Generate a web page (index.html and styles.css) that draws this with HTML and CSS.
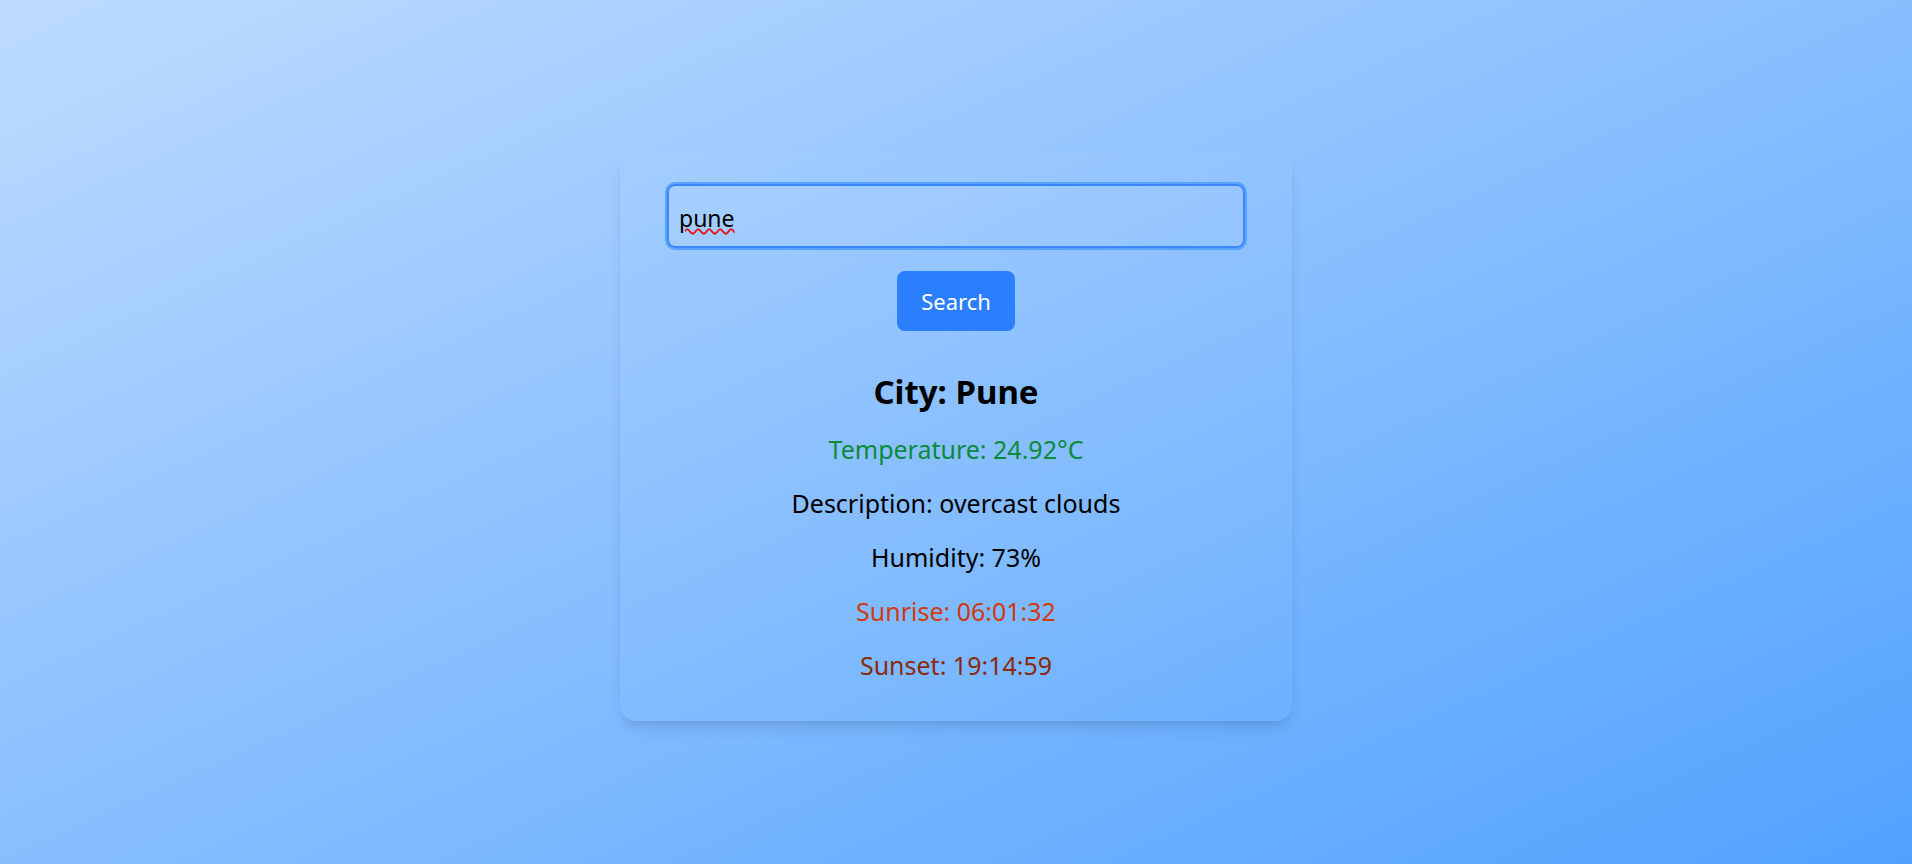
FILE: index.html
```html
<!DOCTYPE html>
<html lang="en">
<head>
<meta charset="utf-8">
<title>Weather</title>
<link rel="stylesheet" href="styles.css">
</head>
<body>
<main class="page">
  <section class="card">
    <div class="input-wrap">
      <input class="city-input" type="text" value="pune" spellcheck="false">
      <span class="spell" aria-hidden="true">pune</span>
    </div>
    <button class="search-btn">Search</button>
    <div class="result">
      <h2 class="city">City: Pune</h2>
      <p class="line temp">Temperature: 24.92°C</p>
      <p class="line">Description: overcast clouds</p>
      <p class="line">Humidity: 73%</p>
      <p class="line sunrise">Sunrise: 06:01:32</p>
      <p class="line sunset">Sunset: 19:14:59</p>
    </div>
  </section>
</main>
</body>
</html>
```
FILE: styles.css
```css
* { box-sizing: border-box; }
html, body { margin: 0; height: 100%; }
body {
  background: linear-gradient(to bottom right, #bedbff, #51a2ff);
  font-family: "Noto Sans", "Open Sans", sans-serif;
  color: #000;
}
.page {
  min-height: 100vh;
  display: flex;
  flex-direction: column;
  align-items: center;
  padding-top: 152px;
}
.card {
  width: 672px;
  padding: 32px 47px 0;
  height: 569px;
  border-radius: 16px;
  background: rgba(255, 255, 255, 0.02);
  box-shadow: 0 10px 15px -3px rgba(0, 0, 0, 0.1), 0 4px 6px -4px rgba(0, 0, 0, 0.1);
  display: flex;
  flex-direction: column;
  align-items: center;
}
.input-wrap {
  position: relative;
  width: 100%;
}
.city-input {
  display: block;
  width: 100%;
  height: 64px;
  padding: 4px 10px 0;
  font: inherit;
  font-size: 23px;
  color: #000;
  background: rgba(255, 255, 255, 0.06);
  border: 2px solid #3b87ff;
  border-radius: 8px;
  box-shadow: 0 0 0 2px #5aa2ff;
  outline: none;
}
.spell {
  position: absolute;
  left: 12px;
  top: 15px;
  font-size: 23px;
  line-height: 32px;
  color: transparent;
  pointer-events: none;
  text-decoration: underline wavy #e5141b;
  text-decoration-thickness: 1.5px;
  text-underline-offset: 4px;
}
.search-btn {
  margin-top: 23px;
  width: 118px;
  height: 60px;
  border: none;
  border-radius: 8px;
  background: #2b7fff;
  color: #fff;
  font: inherit;
  font-size: 22px;
}
.result {
  display: flex;
  flex-direction: column;
  align-items: center;
  margin-top: 41px;
}
.city {
  margin: 0 0 3px;
  font-size: 33px;
  line-height: 40px;
  font-weight: 700;
}
.line {
  margin: 14px 0 0;
  font-size: 25px;
  line-height: 40px;
}
.temp { color: #0a8a3a; }
.sunrise { color: #d13a0e; }
.sunset { color: #8a2a0c; }
```
